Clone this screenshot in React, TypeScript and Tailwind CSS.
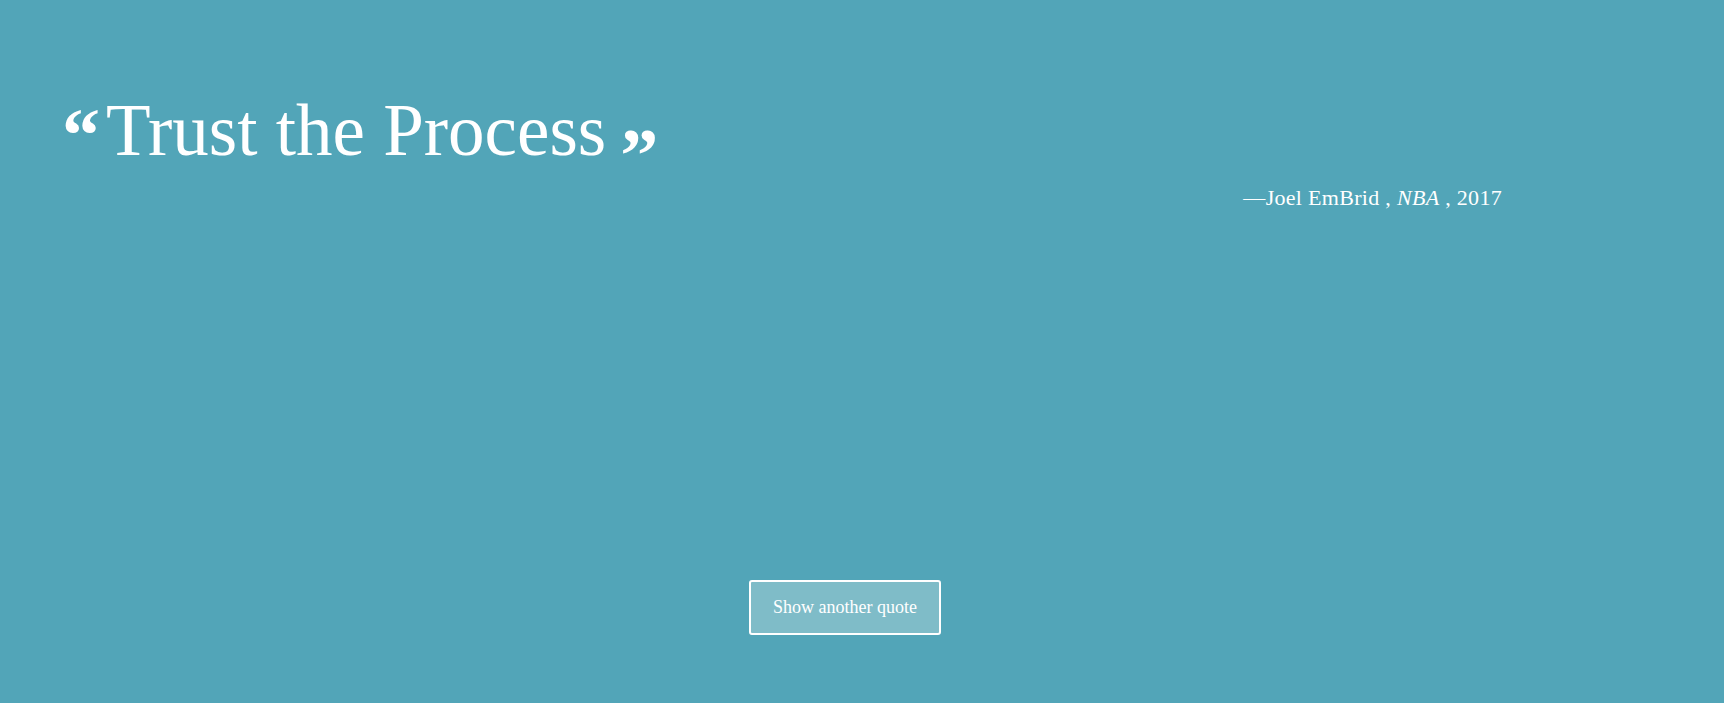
import React from "react"

/**
 * Random Quote Machine - single quote card with attribution and a refresh button
 */
export default function App() {
  const quote = {
    text: "Trust the Process",
    author: "Joel EmBrid",
    source: "NBA",
    year: "2017",
  }

  return (
    <div
      className="min-h-[703px] w-full bg-[#52a5b8] text-white flex flex-col"
      style={{ fontFamily: '"Liberation Serif", "DejaVu Serif", serif' }}
    >
      <div className="px-[62px] pt-[91px]">
        {/* Quote */}
        <h1 className="flex items-start text-[73px] leading-[80px] font-normal">
          <span className="text-[76px] leading-none font-bold mt-[6px] mr-[6px]">“</span>
          <span>{quote.text}</span>
          <span className="text-[76px] leading-none font-bold mt-[26px] ml-[14px]">”</span>
        </h1>

        {/* Attribution */}
        <div className="flex justify-end pr-[160px] mt-[-12px]">
          <p className="text-[22px] tracking-[0.3px]">
            —{quote.author} , <em>{quote.source}</em> , {quote.year}
          </p>
        </div>
      </div>

      <div className="flex justify-center pr-[34px] mt-[366px]">
        <button className="w-[192px] h-[55px] border-2 border-white rounded-[3px] bg-[#7fbcc8] text-[18px] text-white">
          Show another quote
        </button>
      </div>
    </div>
  )
}
